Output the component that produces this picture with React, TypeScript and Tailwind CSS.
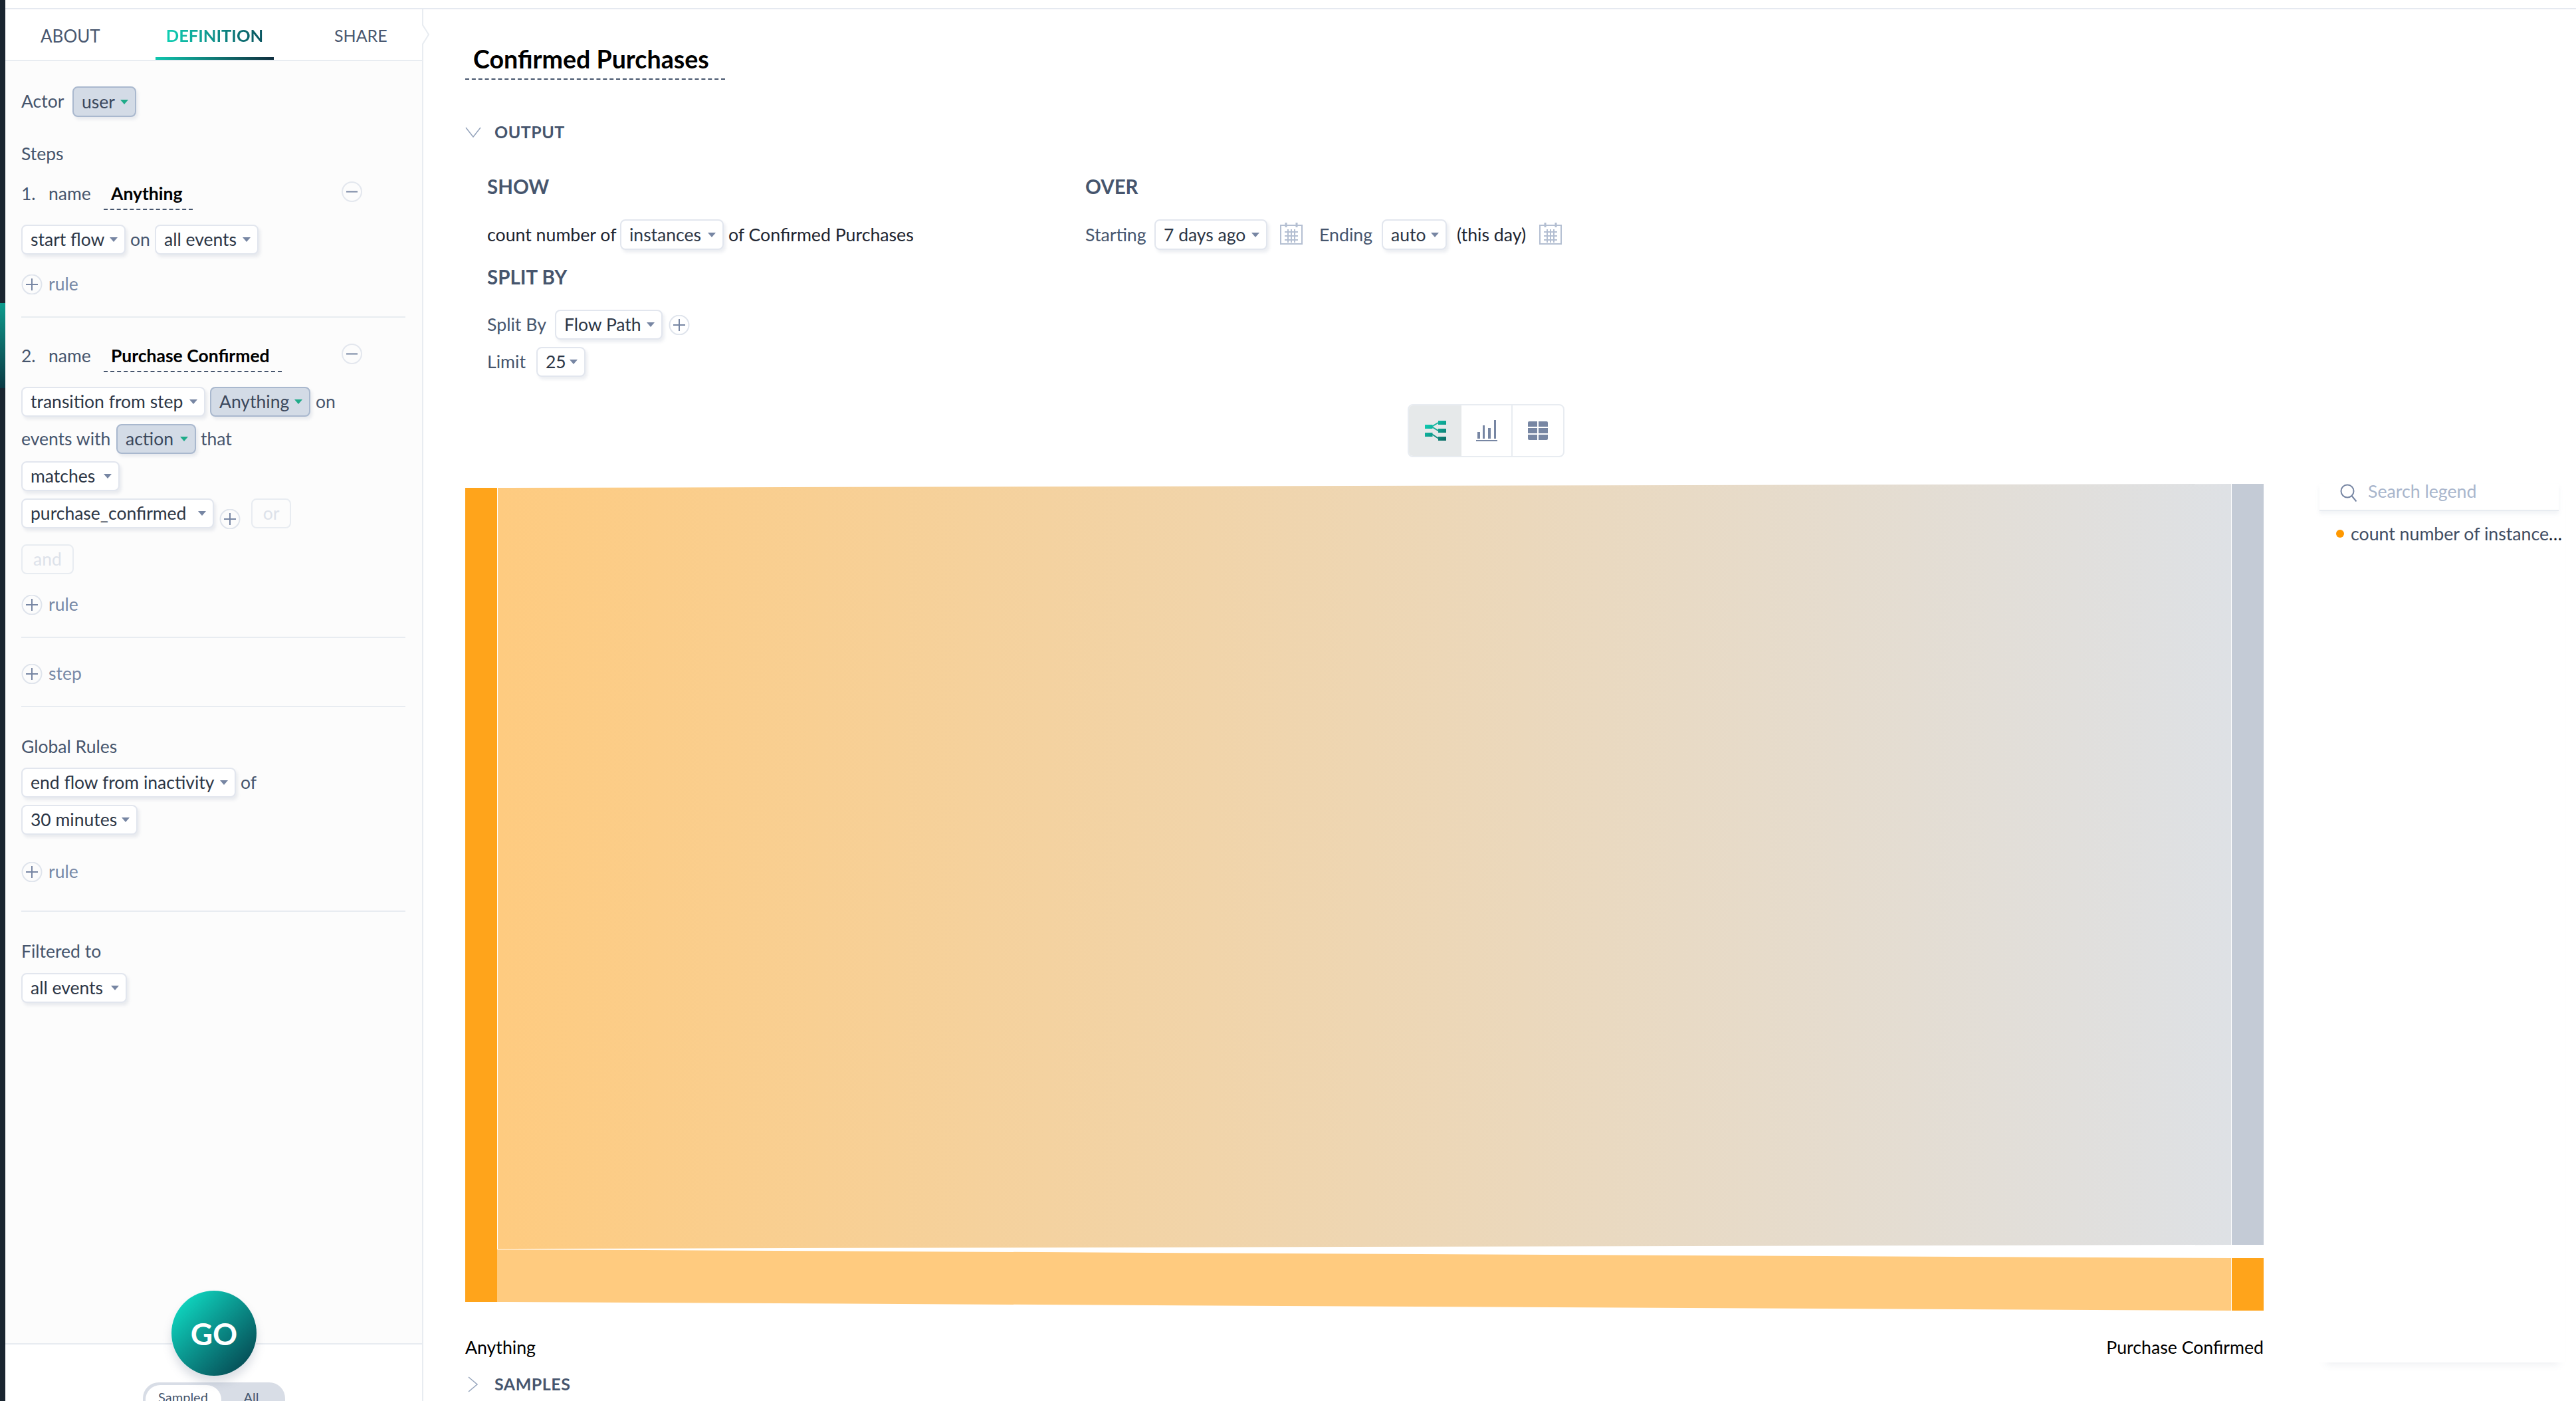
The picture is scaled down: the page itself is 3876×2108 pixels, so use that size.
const labelText = "text-[#46556d]";

function Caret({ active = false }: { active?: boolean }) {
  return (
    <svg width="12" height="7" viewBox="0 0 12 7" className="shrink-0">
      <path d="M0 0h12L6 7z" fill={active ? "#1fab89" : "#7786a3"} />
    </svg>
  );
}

function Dropdown({ label, className = "", active = false }: { label: string; className?: string; active?: boolean }) {
  return (
    <div
      className={`flex h-[45px] shrink-0 items-center justify-between rounded-[8px] border-2 pl-[12px] pr-[10px] text-[26.5px] leading-none shadow-[3px_4px_4px_rgba(120,135,165,0.14)] ${
        active ? "border-[#a9b8ce] bg-[#d3dbe6] text-[#3a475c]" : "border-[#e2e6ee] bg-white text-[#2c3646]"
      } ${className}`}
    >
      <span className="whitespace-nowrap">{label}</span>
      <Caret active={active} />
    </div>
  );
}

function PlusCircle({ className = "" }: { className?: string }) {
  return (
    <svg width="32" height="30" viewBox="0 0 32 30" className={`shrink-0 ${className}`} fill="none">
      <circle cx="16" cy="15" r="14.5" stroke="#dfe4ec" strokeWidth="2" />
      <path d="M16 6v18M7 15h18" stroke="#7786a3" strokeWidth="2" />
    </svg>
  );
}

function MinusCircle() {
  return (
    <svg width="31" height="31" viewBox="0 0 31 31" className="mt-[3px] shrink-0" fill="none">
      <circle cx="15.5" cy="15.5" r="14.5" stroke="#e3e7ee" strokeWidth="2" />
      <path d="M7 15.5h17" stroke="#7786a3" strokeWidth="2" />
    </svg>
  );
}

function AddRow({ label, className = "" }: { label: string; className?: string }) {
  return (
    <div className={`flex h-[30px] items-center gap-[9px] text-[26.5px] text-[#7889a6] ${className}`}>
      <PlusCircle />
      <span>{label}</span>
    </div>
  );
}

function Divider({ className = "" }: { className?: string }) {
  return <div className={`h-[2px] w-[578px] bg-[#e8ecf1] ${className}`} />;
}

function StepName({ num, name, className = "", fieldClass = "" }: { num: string; name: string; className?: string; fieldClass?: string }) {
  return (
    <div className={`flex h-[46px] w-[513px] items-start justify-between text-[26.5px] ${labelText} ${className}`}>
      <div className="flex items-start">
        <span className="w-[41px] leading-[42px]">{num}</span>
        <span className="w-[83px] leading-[42px]">name</span>
        <div className={`h-[46px] whitespace-nowrap border-b-2 border-dashed border-[#46556d] pl-[11px] font-bold leading-[42px] text-black ${fieldClass}`}>
          {name}
        </div>
      </div>
      <MinusCircle />
    </div>
  );
}

function Calendar({ className = "" }: { className?: string }) {
  return (
    <svg width="34" height="34" viewBox="0 0 34 34" fill="none" stroke="#b4bfd2" strokeWidth="2" className={`-mt-[4px] shrink-0 ${className}`}>
      <path d="M1 5h32v28H1z" />
      <path d="M9 1v7M25 1v7" strokeWidth="3" />
      <path d="M7 15h20M7 21h20M7 27h20M12 11v20M17 11v20M22 11v20" />
    </svg>
  );
}

function FlowIcon() {
  return (
    <svg width="32" height="30" viewBox="0 0 32 30">
      <defs>
        <linearGradient id="flowGrad" gradientUnits="userSpaceOnUse" x1="4" y1="0" x2="28" y2="30">
          <stop offset="0" stopColor="#10d4b8" />
          <stop offset="1" stopColor="#0e6f68" />
        </linearGradient>
      </defs>
      <g fill="url(#flowGrad)">
        <rect x="20" y="0" width="12" height="6" />
        <rect x="0" y="6" width="11.5" height="6" />
        <rect x="20" y="12" width="12" height="6" />
        <rect x="0" y="18" width="11.5" height="6" />
        <rect x="20" y="24" width="12" height="6" />
      </g>
      <path d="M11 8.5l9-5.5M11 9.5l9 5.5M11 20.5l9 6" stroke="url(#flowGrad)" strokeWidth="2" fill="none" />
    </svg>
  );
}

function BarsIcon() {
  return (
    <svg width="32" height="32" viewBox="0 0 32 32" fill="#7786a3">
      <rect x="2" y="18" width="4" height="10" />
      <rect x="10" y="8" width="3" height="20" />
      <rect x="18" y="12" width="4" height="16" />
      <rect x="27" y="0" width="3" height="28" />
      <rect x="0" y="30" width="32" height="2" />
    </svg>
  );
}

function GridIcon() {
  return (
    <svg width="30" height="28" viewBox="0 0 30 28" fill="#7786a3">
      <path d="M2 0h12v8H0V2a2 2 0 0 1 2-2zM16 0h12a2 2 0 0 1 2 2v6H16zM0 10h14v8H0zM16 10h14v8H16zM0 20h14v8H2a2 2 0 0 1-2-2zM16 20h14v6a2 2 0 0 1-2 2H16z" />
    </svg>
  );
}

function Sankey() {
  return (
    <svg width="2706" height="1244" viewBox="0 0 2706 1244" className="block">
      <defs>
        <linearGradient id="upperLink" gradientUnits="userSpaceOnUse" x1="49" y1="0" x2="2657" y2="0">
          <stop offset="0" stopColor="#fecb80" />
          <stop offset="1" stopColor="#dee1e5" />
        </linearGradient>
      </defs>
      <path d="M49 6L2657 0V1145L49 1151Z" fill="url(#upperLink)" />
      <path d="M48 1152L2657 1165V1244L48 1231Z" fill="#ffcb7f" />
      <rect x="0" y="6" width="48" height="1225" fill="#ffa41b" />
      <rect x="2658" y="0" width="48" height="1145" fill="#c4cbd6" />
      <rect x="2658" y="1165" width="48" height="79" fill="#ffa41b" />
    </svg>
  );
}

function Sidebar() {
  return (
    <aside className="flex w-[629px] shrink-0 flex-col border-r-2 border-[#e8ecf1] bg-[#fcfcfc]">
      {/* tabs */}
      <div className="flex h-[78px] shrink-0 items-stretch border-b-2 border-[#e8ecf1] bg-white text-[26px]">
        <div className="flex w-[226px] items-center pl-[53px] pt-[4px] text-[#4a5870]">ABOUT</div>
        <div className="flex w-[178px] items-center justify-center border-b-4 pt-[7px] text-[25.5px] font-bold [border-image:linear-gradient(90deg,#0fc7af,#0f2d3d)_1]">
          <span className="bg-gradient-to-r from-[#0fd0b4] to-[#0a5560] bg-clip-text text-transparent">DEFINITION</span>
        </div>
        <div className="flex flex-1 items-center pl-[91px] pt-[4px] text-[25px] text-[#4a5870]">SHARE</div>
      </div>

      {/* definition form */}
      <div className="pl-[24px]">
        <div className={`mt-[38px] flex h-[46px] items-center text-[26.5px] ${labelText}`}>
          <span className="w-[77px]">Actor</span>
          <Dropdown label="user" active className="h-[46px] w-[96px]" />
        </div>
        <div className={`mt-[37px] text-[26.5px] leading-[36px] ${labelText}`}>Steps</div>

        <StepName num="1." name="Anything" className="mt-[21px]" fieldClass="w-[134px]" />
        <div className={`mt-[22px] flex items-center text-[26.5px] ${labelText}`}>
          <Dropdown label="start flow" className="w-[157px]" />
          <span className="ml-[7px] w-[37px]">on</span>
          <Dropdown label="all events" className="w-[156px]" />
        </div>
        <AddRow label="rule" className="mt-[30px]" />
        <Divider className="mt-[33px]" />

        <StepName num="2." name="Purchase Confirmed" className="mt-[36px]" fieldClass="w-[268px]" />
        <div className={`mt-[22px] flex items-center text-[26.5px] ${labelText}`}>
          <Dropdown label="transition from step" className="w-[277px]" />
          <Dropdown label="Anything" active className="ml-[7px] w-[151px]" />
          <span className="ml-[8px]">on</span>
        </div>
        <div className={`mt-[11px] flex items-center text-[26.5px] ${labelText}`}>
          <span className="w-[143px] whitespace-nowrap">events with</span>
          <Dropdown label="action" active className="w-[120px]" />
          <span className="ml-[7px]">that</span>
        </div>
        <Dropdown label="matches" className="mt-[11px] w-[148px]" />
        <div className="mt-[11px] flex items-start">
          <Dropdown label="purchase_confirmed" className="w-[290px]" />
          <PlusCircle className="ml-[8px] mt-[16px]" />
          <div className="ml-[16px] flex h-[45px] w-[60px] items-center justify-center rounded-[8px] border-2 border-[#e8ecf1] text-[26.5px] text-[#dde2ea]">
            or
          </div>
        </div>
        <div className="mt-[23px] flex h-[45px] w-[79px] items-center justify-center rounded-[8px] border-2 border-[#e8ecf1] text-[26.5px] text-[#dde2ea]">
          and
        </div>
        <AddRow label="rule" className="mt-[31px]" />
        <Divider className="mt-[33px]" />
        <AddRow label="step" className="mt-[39px]" />
        <Divider className="mt-[33px]" />

        <div className={`mt-[41px] text-[26.5px] leading-[36px] ${labelText}`}>Global Rules</div>
        <div className={`mt-[14px] flex items-center text-[26.5px] ${labelText}`}>
          <Dropdown label="end flow from inactivity" className="w-[323px]" />
          <span className="ml-[7px]">of</span>
        </div>
        <Dropdown label="30 minutes" className="mt-[11px] w-[175px]" />
        <AddRow label="rule" className="mt-[41px]" />
        <Divider className="mt-[43px]" />
        <div className={`mt-[41px] text-[26.5px] leading-[36px] ${labelText}`}>Filtered to</div>
        <Dropdown label="all events" className="mt-[15px] w-[159px]" />
      </div>

      <div className="flex-1" />

      {/* run button + sampling toggle */}
      <div className="relative h-[87px] shrink-0 border-t-2 border-[#e8ecf1] bg-white">
        <div className="absolute -top-[81px] left-[250px] flex h-[128px] w-[128px] items-center justify-center rounded-full bg-gradient-to-br from-[#10ecd0] to-[#053c48] text-[46px] font-bold text-white shadow-[0_10px_14px_rgba(90,105,130,0.22)]">
          GO
        </div>
        <div className="mx-auto mt-[57px] flex h-[50px] w-[214px] items-start rounded-t-[24px] bg-[#d8dde6] p-[4px] text-[20px] leading-[30px] text-[#46556d]">
          <div className="flex h-[44px] w-[114px] items-start justify-center rounded-[22px] bg-white pt-[3px]">Sampled</div>
          <div className="flex-1 pl-[34px] pt-[3px]">All</div>
        </div>
      </div>
    </aside>
  );
}

function Main() {
  return (
    <main className="relative flex-1 pl-[63px] text-[26.7px]">
      {/* notch on the panel edge */}
      <svg width="12" height="32" viewBox="0 0 12 32" className="absolute -left-[2px] top-[22px]">
        <path d="M0 0l10 16L0 32" fill="#fff" stroke="#e8ecf1" strokeWidth="2" />
      </svg>

      <div className="mt-[46px] h-[60px] w-[391px] whitespace-nowrap border-b-2 border-dashed border-[#46556d] pl-[12px] text-[37.6px] font-bold leading-[58px] text-black">
        Confirmed Purchases
      </div>

      <div className="mt-[61px] flex h-[36px] items-center">
        <svg width="24" height="16" viewBox="0 0 24 16" fill="none" stroke="#94a3bb" strokeWidth="1.5">
          <path d="M1 1l11 14L23 1" />
        </svg>
        <span className="ml-[20px] text-[25px] font-bold tracking-[0.5px] text-[#46556d]">OUTPUT</span>
      </div>

      <div className="ml-[33px] flex">
        <div className="w-[900px]">
          <div className="mt-[44px] text-[29.5px] font-bold leading-[40px] text-[#46556d]">SHOW</div>
          <div className="mt-[29px] flex items-center text-[#1d2430]">
            <span className="w-[200px] whitespace-nowrap">count number of</span>
            <Dropdown label="instances" className="h-[46px] w-[156px]" />
            <span className="ml-[7px] whitespace-nowrap">of Confirmed Purchases</span>
          </div>
          <div className="mt-[21px] text-[29.5px] font-bold leading-[40px] text-[#46556d]">SPLIT BY</div>
          <div className="mt-[29px] flex items-center">
            <span className={`w-[102px] ${labelText}`}>Split By</span>
            <Dropdown label="Flow Path" className="w-[162px]" />
            <PlusCircle className="ml-[9px]" />
          </div>
          <div className="mt-[11px] flex items-center">
            <span className={`w-[74px] ${labelText}`}>Limit</span>
            <Dropdown label="25" className="w-[74px]" />
          </div>
        </div>
        <div>
          <div className="mt-[44px] text-[29.5px] font-bold leading-[40px] text-[#46556d]">OVER</div>
          <div className="mt-[29px] flex items-center">
            <span className={`w-[104px] ${labelText}`}>Starting</span>
            <Dropdown label="7 days ago" className="h-[46px] w-[170px]" />
            <Calendar className="ml-[19px]" />
            <span className={`ml-[25px] w-[94px] ${labelText}`}>Ending</span>
            <Dropdown label="auto" className="h-[46px] w-[98px]" />
            <span className="ml-[15px] w-[124px] whitespace-nowrap text-[#1d2430]">(this day)</span>
            <Calendar />
          </div>
        </div>
      </div>

      {/* chart type switch */}
      <div className="ml-[1418px] mt-[41px] flex h-[80px] w-[236px] overflow-hidden rounded-[8px] border-2 border-[#e8ecf1]">
        <div className="flex w-[79px] items-center justify-center bg-[#e6e9ea]">
          <FlowIcon />
        </div>
        <div className="flex w-[77px] items-center justify-center border-r-2 border-[#e8ecf1]">
          <BarsIcon />
        </div>
        <div className="flex flex-1 items-center justify-center">
          <GridIcon />
        </div>
      </div>

      <div className="mt-[40px] flex items-start">
        <div className="w-[2706px] shrink-0">
          <Sankey />
          <div className="mt-[37px] flex h-[36px] items-center justify-between text-black">
            <span>Anything</span>
            <span>Purchase Confirmed</span>
          </div>
          <div className="mt-[20px] flex h-[36px] items-center">
            <svg width="16" height="24" viewBox="0 0 16 24" fill="none" stroke="#94a3bb" strokeWidth="1.5" className="ml-[4px]">
              <path d="M1 1l13 11L1 23" />
            </svg>
            <span className="ml-[24px] text-[25px] font-bold tracking-[0.5px] text-[#46556d]">SAMPLES</span>
          </div>
        </div>

        {/* legend */}
        <div className="ml-[84px] h-[1322px] w-[370px] shrink-0 shadow-[0_12px_12px_-10px_rgba(90,105,130,0.12)]">
          <div className="flex h-[41px] w-[360px] items-start gap-[16px] border-b-2 border-[#e8ecf1] pl-[31px] shadow-[0_4px_6px_rgba(120,135,165,0.1)]">
            <svg width="26" height="27" viewBox="0 0 26 27" fill="none" stroke="#7786a3" strokeWidth="2" className="shrink-0">
              <circle cx="11" cy="11" r="9.5" />
              <path d="M17.5 18l7 8.5" />
            </svg>
            <span className="leading-[22px] text-[#a9b6cc]">Search legend</span>
          </div>
          <div className="mt-[14px] flex items-center pl-[25px]">
            <span className="h-[12px] w-[12px] shrink-0 rounded-full bg-[#ff9800]" />
            <span className="ml-[10px] whitespace-nowrap text-[#3f4d63]">
              count number of instance<span className="text-[#111827]">…</span>
            </span>
          </div>
        </div>
      </div>
    </main>
  );
}

export default function App() {
  return (
    <div className="flex h-[2108px] w-[3876px] overflow-hidden bg-white [font-family:Lato,sans-serif]">
      {/* app nav rail, cut off at the left edge */}
      <div className="w-[8px] shrink-0 bg-[#1a2530]">
        <div className="mt-[456px] h-[128px] bg-gradient-to-b from-[#0d9c8d] to-[#0a3a44]" />
      </div>
      <div className="flex min-w-0 flex-1 flex-col">
        <div className="h-[14px] shrink-0 border-b-2 border-[#e5e9f0] bg-white" />
        <div className="flex min-h-0 flex-1">
          <Sidebar />
          <Main />
        </div>
      </div>
    </div>
  );
}
